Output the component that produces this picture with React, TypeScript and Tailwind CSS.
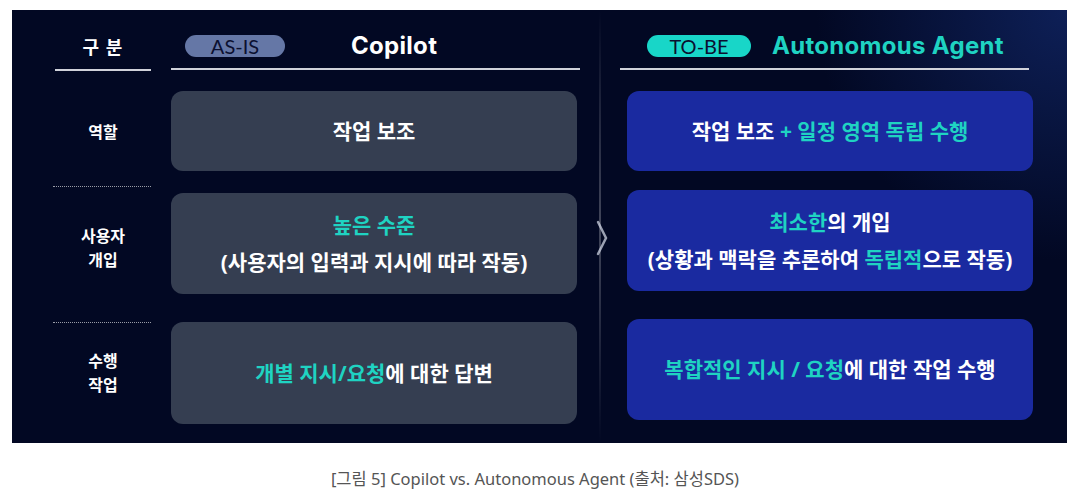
import React from "react";

const KR = { fontFamily: '"Noto Sans", "Noto Sans CJK KR", sans-serif' };

const Teal = ({ children }: { children: React.ReactNode }) => (
  <span className="text-[#1fd3c2]">{children}</span>
);

function LeftCard({ h, mt, children }: { h: string; mt: string; children: React.ReactNode }) {
  return (
    <div
      className={`${h} ${mt} w-[406px] rounded-[12px] bg-[#353e51] flex flex-col items-center justify-center text-[21px] font-bold text-white leading-[37px]`}
    >
      {children}
    </div>
  );
}

function RightCard({ h, mt, children }: { h: string; mt: string; children: React.ReactNode }) {
  return (
    <div
      className={`${h} ${mt} ml-[7px] w-[406px] rounded-[12px] bg-[#1a2aa0] flex flex-col items-center justify-center text-[21px] font-bold text-white leading-[37px]`}
    >
      {children}
    </div>
  );
}

export default function App() {
  return (
    <div className="w-[1070px] h-[497px] bg-white" style={KR}>
      {/* Figure panel */}
      <div className="ml-[12px] mt-[10px] w-[1055px] h-[433px] bg-[#020823] bg-[radial-gradient(circle_at_100%_0%,rgba(28,60,150,0.45),transparent_22%)] flex pl-[43px]">
        {/* Label column */}
        <div className="w-[96px] flex flex-col pt-[25px]">
          <div className="h-[24px] flex items-center justify-center text-[18px] font-bold text-white tracking-[1px]">
            구 분
          </div>
          <div className="mt-[10px] h-[2px] bg-[#d0d2da]" />
          <div className="mt-[21px] h-[80px] flex items-center justify-center text-[16px] font-bold text-white">
            역할
          </div>
          <div className="mt-[14px] -ml-[2px] border-t border-dotted border-white/60" />
          <div className="h-[122px] flex flex-col items-center justify-center text-[16px] font-bold text-white leading-[24px]">
            <span>사용자</span>
            <span>개입</span>
          </div>
          <div className="mt-[13px] -ml-[2px] border-t border-dotted border-white/60" />
          <div className="h-[100px] flex flex-col items-center justify-center text-[16px] font-bold text-white leading-[24px]">
            <span>수행</span>
            <span>작업</span>
          </div>
        </div>

        {/* AS-IS column */}
        <div className="ml-[20px] w-[409px] flex flex-col pt-[25px]">
          <div className="h-[22px] flex items-center">
            <div
              className="ml-[14px] w-[100px] h-[22px] rounded-full bg-[#6577a6] flex items-center justify-center text-[20px] leading-none font-normal text-[#0b1030]"
              style={{ fontFamily: "Lato, sans-serif" }}
            >
              AS-IS
            </div>
            <div
              className="ml-[66px] text-[24px] font-bold text-white tracking-[0.3px]"
              style={{ fontFamily: "Inter, sans-serif" }}
            >
              Copilot
            </div>
          </div>
          <div className="mt-[11px] h-[2px] bg-[#d0d2da]" />
          <LeftCard h="h-[80px]" mt="mt-[21px]">
            작업 보조
          </LeftCard>
          <LeftCard h="h-[101px]" mt="mt-[22px]">
            <Teal>높은 수준</Teal>
            <span>(사용자의 입력과 지시에 따라 작동)</span>
          </LeftCard>
          <LeftCard h="h-[102px]" mt="mt-[28px]">
            <span>
              <Teal>개별 지시/요청</Teal>에 대한 답변
            </span>
          </LeftCard>
        </div>

        {/* Divider */}
        <div className="w-[40px] relative flex justify-center">
          <div className="w-[2px] h-full bg-gradient-to-b from-transparent via-white/25 to-transparent" />
          <svg
            className="absolute left-[15px] top-[210px]"
            width="14"
            height="36"
            viewBox="0 0 14 36"
            fill="none"
          >
            <path d="M3 2 L11 18 L3 34" stroke="rgba(220,225,240,0.7)" strokeWidth="2.5" strokeLinecap="round" />
          </svg>
        </div>

        {/* TO-BE column */}
        <div className="w-[409px] flex flex-col pt-[25px]">
          <div className="h-[22px] flex items-center">
            <div
              className="ml-[27px] w-[104px] h-[22px] rounded-full bg-[#18d6c8] flex items-center justify-center text-[20px] leading-none font-normal text-[#0b1030]"
              style={{ fontFamily: "Lato, sans-serif" }}
            >
              TO-BE
            </div>
            <div
              className="ml-[21px] text-[24px] font-bold text-[#1fd3c2] tracking-[0.3px]"
              style={{ fontFamily: "Inter, sans-serif" }}
            >
              Autonomous Agent
            </div>
          </div>
          <div className="mt-[11px] h-[2px] bg-[#d0d2da]" />
          <RightCard h="h-[80px]" mt="mt-[21px]">
            <span>
              작업 보조 <Teal>+ 일정 영역 독립 수행</Teal>
            </span>
          </RightCard>
          <RightCard h="h-[101px]" mt="mt-[19px]">
            <span>
              <Teal>최소한</Teal>의 개입
            </span>
            <span>
              (상황과 맥락을 추론하여 <Teal>독립적</Teal>으로 작동)
            </span>
          </RightCard>
          <RightCard h="h-[101px]" mt="mt-[28px]">
            <span>
              <Teal>복합적인 지시 / 요청</Teal>에 대한 작업 수행
            </span>
          </RightCard>
        </div>
      </div>

      {/* Caption */}
      <div className="mt-[26px] text-center text-[16.5px] leading-[20px] text-[#555]">
        [그림 5] Copilot vs. Autonomous Agent (출처: 삼성SDS)
      </div>
    </div>
  );
}
